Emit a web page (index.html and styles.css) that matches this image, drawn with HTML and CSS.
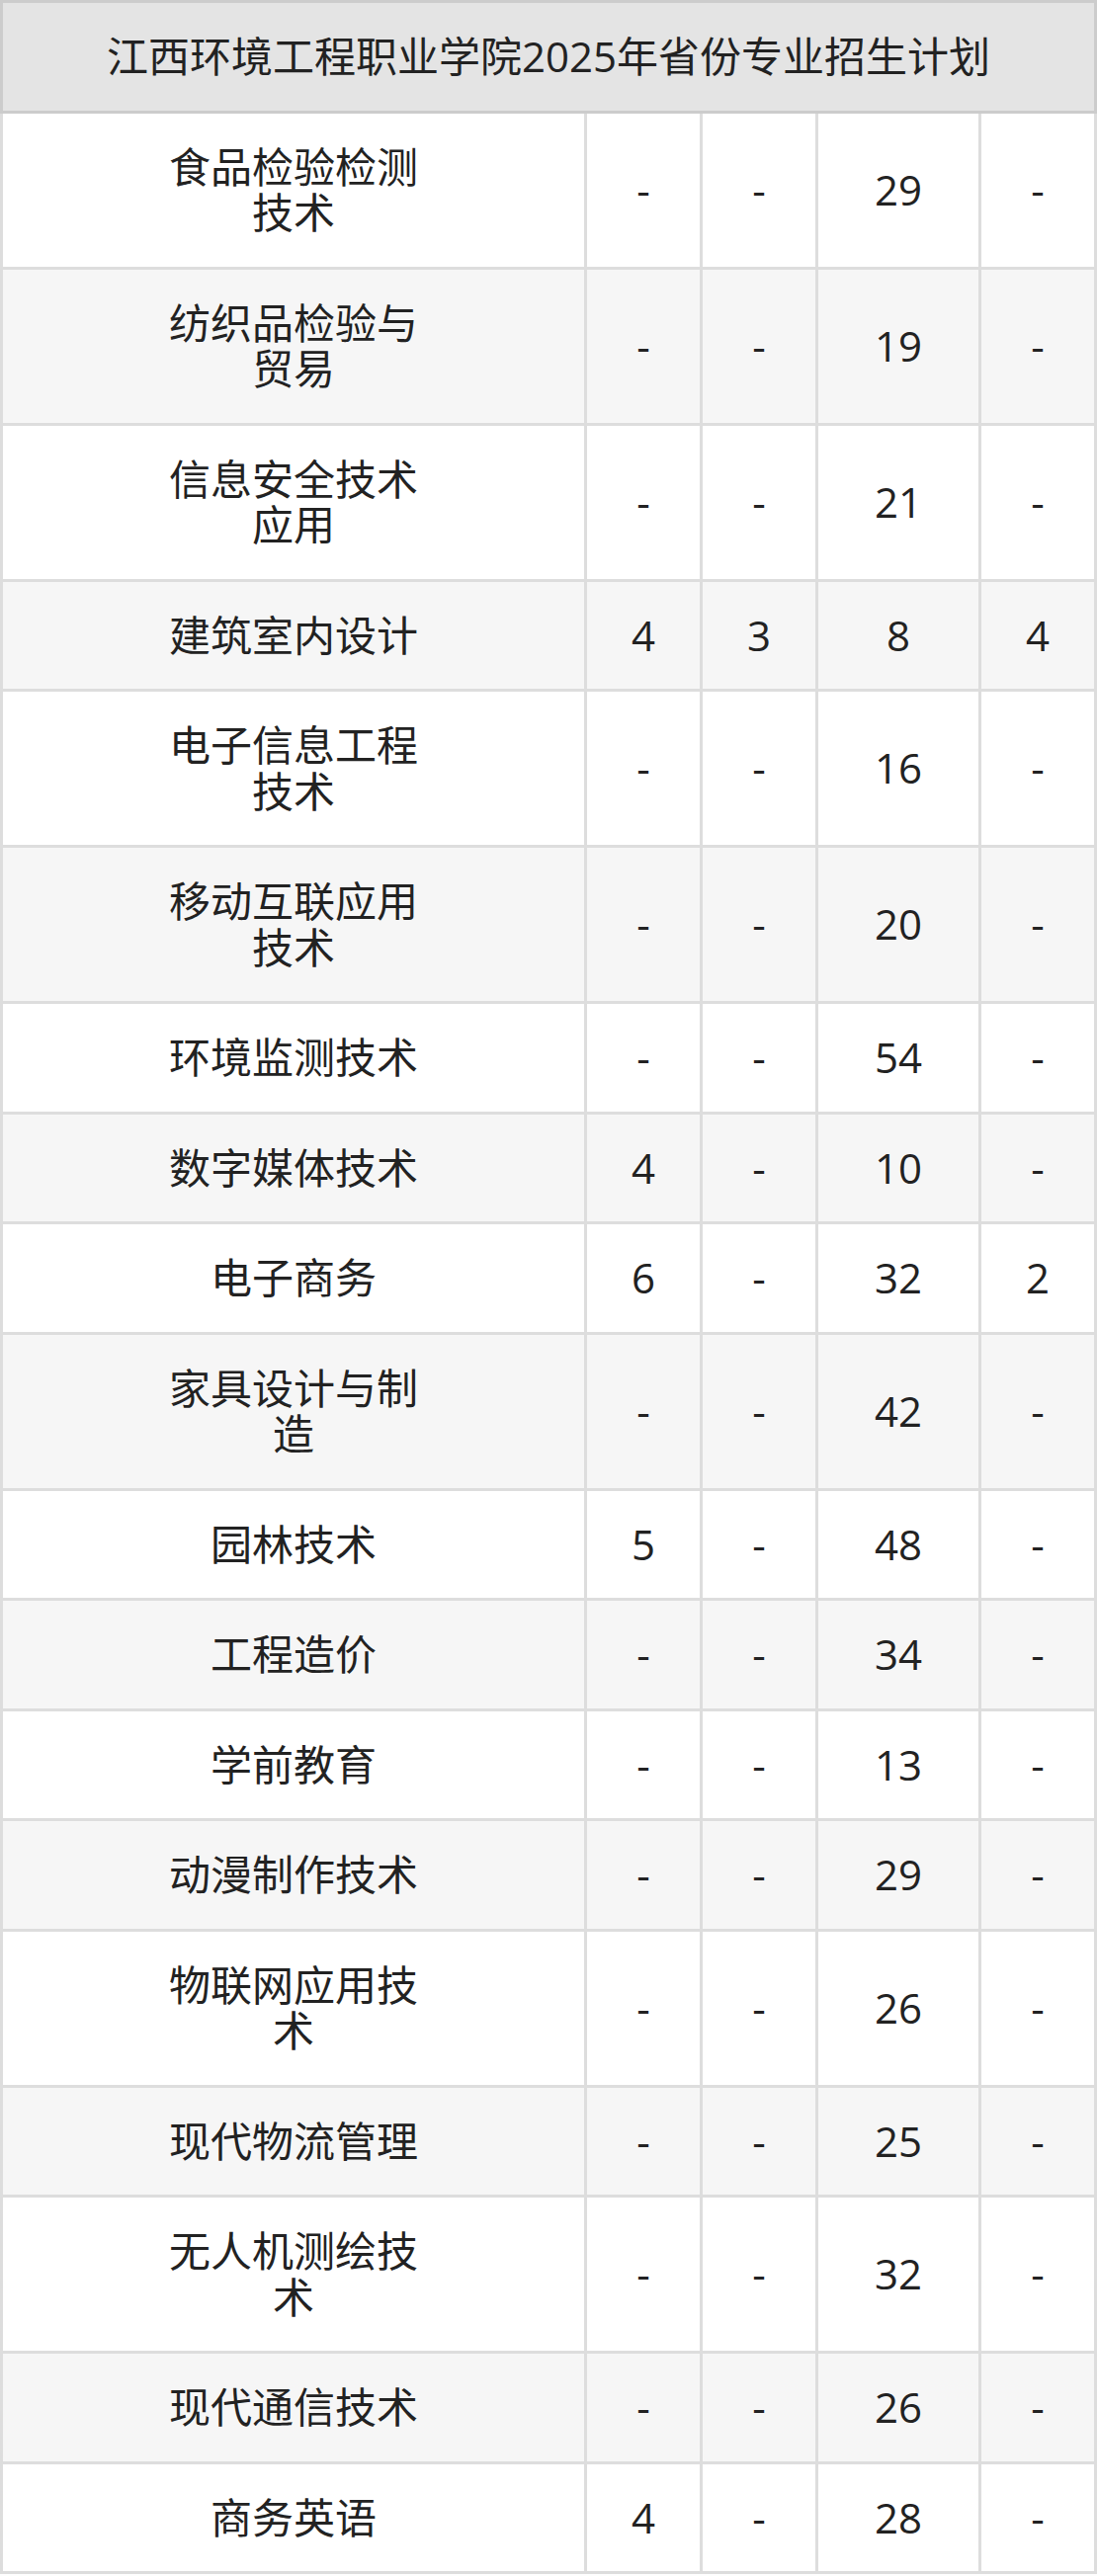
FILE: index.html
```html
<!DOCTYPE html>
<html lang="zh-CN">
<head>
<meta charset="utf-8">
<title>江西环境工程职业学院2025年省份专业招生计划</title>
<link rel="stylesheet" href="styles.css">
</head>
<body>
<table class="plan">
  <colgroup>
    <col class="c-name">
    <col class="c-num">
    <col class="c-num">
    <col class="c-wide">
    <col class="c-num">
  </colgroup>
  <thead>
    <tr><th colspan="5" class="title">江西环境工程职业学院2025年省份专业招生计划</th></tr>
  </thead>
  <tbody>
    <tr><td class="name">食品检验检测技术</td><td>-</td><td>-</td><td>29</td><td>-</td></tr>
    <tr><td class="name">纺织品检验与贸易</td><td>-</td><td>-</td><td>19</td><td>-</td></tr>
    <tr><td class="name">信息安全技术应用</td><td>-</td><td>-</td><td>21</td><td>-</td></tr>
    <tr><td class="name">建筑室内设计</td><td>4</td><td>3</td><td>8</td><td>4</td></tr>
    <tr><td class="name">电子信息工程技术</td><td>-</td><td>-</td><td>16</td><td>-</td></tr>
    <tr><td class="name">移动互联应用技术</td><td>-</td><td>-</td><td>20</td><td>-</td></tr>
    <tr><td class="name">环境监测技术</td><td>-</td><td>-</td><td>54</td><td>-</td></tr>
    <tr><td class="name">数字媒体技术</td><td>4</td><td>-</td><td>10</td><td>-</td></tr>
    <tr><td class="name">电子商务</td><td>6</td><td>-</td><td>32</td><td>2</td></tr>
    <tr><td class="name">家具设计与制造</td><td>-</td><td>-</td><td>42</td><td>-</td></tr>
    <tr><td class="name">园林技术</td><td>5</td><td>-</td><td>48</td><td>-</td></tr>
    <tr><td class="name">工程造价</td><td>-</td><td>-</td><td>34</td><td>-</td></tr>
    <tr><td class="name">学前教育</td><td>-</td><td>-</td><td>13</td><td>-</td></tr>
    <tr><td class="name">动漫制作技术</td><td>-</td><td>-</td><td>29</td><td>-</td></tr>
    <tr><td class="name">物联网应用技术</td><td>-</td><td>-</td><td>26</td><td>-</td></tr>
    <tr><td class="name">现代物流管理</td><td>-</td><td>-</td><td>25</td><td>-</td></tr>
    <tr><td class="name">无人机测绘技术</td><td>-</td><td>-</td><td>32</td><td>-</td></tr>
    <tr><td class="name">现代通信技术</td><td>-</td><td>-</td><td>26</td><td>-</td></tr>
    <tr><td class="name">商务英语</td><td>4</td><td>-</td><td>28</td><td>-</td></tr>
  </tbody>
</table>
</body>
</html>
```

FILE: styles.css
```css
html, body {
  margin: 0;
  padding: 0;
  background: #ffffff;
}

body {
  font-family: "Open Sans", "Noto Sans CJK SC", sans-serif;
  color: #222222;
}

.plan {
  width: 1109px;
  border-collapse: collapse;
  table-layout: fixed;
}

.c-name { width: 591px; }
.c-num { width: 117px; }
.c-wide { width: 165px; }

.title {
  background: #e4e4e4;
  border: 3px solid #cccccc;
  font-size: 42px;
  font-weight: normal;
  line-height: 46.5px;
  padding: 31px 0;
  text-align: center;
  color: #222222;
}

.plan td {
  border: 3px solid #dddddd;
  font-size: 42px;
  line-height: 46.5px;
  padding: 31px 0;
  text-align: center;
  vertical-align: middle;
}

.plan td.name {
  padding-left: 160px;
  padding-right: 160px;
}

.plan tbody tr:nth-child(even) td {
  background: #f6f6f6;
}
```
